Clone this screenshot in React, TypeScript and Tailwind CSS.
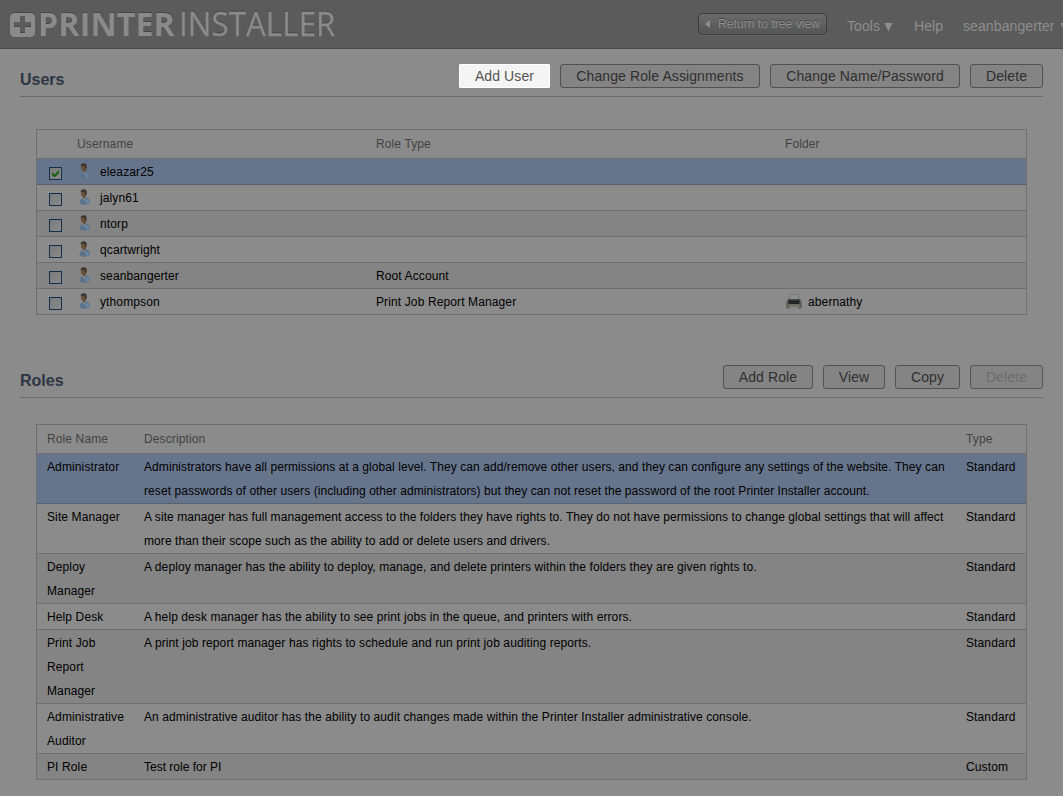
import React from 'react';

const users = [
  { name: 'eleazar25', role: '', folder: '', checked: true },
  { name: 'jalyn61', role: '', folder: '' },
  { name: 'ntorp', role: '', folder: '' },
  { name: 'qcartwright', role: '', folder: '' },
  { name: 'seanbangerter', role: 'Root Account', folder: '' },
  { name: 'ythompson', role: 'Print Job Report Manager', folder: 'abernathy' },
];

const roles = [
  {
    name: ['Administrator'],
    text: [
      'Administrators have all permissions at a global level. They can add/remove other users, and they can configure any settings of the website. They can',
      'reset passwords of other users (including other administrators) but they can not reset the password of the root Printer Installer account.',
    ],
    type: 'Standard',
    tracking: 'tracking-[0.072px]',
  },
  {
    name: ['Site Manager'],
    text: [
      'A site manager has full management access to the folders they have rights to. They do not have permissions to change global settings that will affect',
      'more than their scope such as the ability to add or delete users and drivers.',
    ],
    type: 'Standard',
    tracking: 'tracking-[0.076px]',
  },
  {
    name: ['Deploy', 'Manager'],
    text: ['A deploy manager has the ability to deploy, manage, and delete printers within the folders they are given rights to.'],
    type: 'Standard',
    tracking: 'tracking-[0.09px]',
  },
  {
    name: ['Help Desk'],
    text: ['A help desk manager has the ability to see print jobs in the queue, and printers with errors.'],
    type: 'Standard',
    tracking: 'tracking-[0.09px]',
  },
  {
    name: ['Print Job', 'Report', 'Manager'],
    text: ['A print job report manager has rights to schedule and run print job auditing reports.'],
    type: 'Standard',
    tracking: 'tracking-[0.105px]',
  },
  {
    name: ['Administrative', 'Auditor'],
    text: ['An administrative auditor has the ability to audit changes made within the Printer Installer administrative console.'],
    type: 'Standard',
    tracking: 'tracking-[0.092px]',
  },
  { name: ['PI Role'], text: ['Test role for PI'], type: 'Custom', tracking: 'tracking-normal' },
];

function rowColor(i: number) {
  if (i === 0) return 'bg-[#67758c] border-[#58626f]';
  return i % 2 === 1 ? 'bg-[#8b8b8b] border-[#6f6f6f]' : 'bg-[#848484] border-[#6f6f6f]';
}

function Logo() {
  return (
    <svg width="340" height="48" className="block shrink-0" fontFamily="'Open Sans', sans-serif" fontSize="32.5">
      <g fill="#8a8a8a" className="[filter:drop-shadow(0_-1px_0_#484848)]">
        <path
          fillRule="evenodd"
          d="M14.500 13h16a4.500 4.500 0 0 1 4.500 4.500v15a4.500 4.500 0 0 1-4.500 4.500h-16a4.500 4.500 0 0 1-4.500-4.500v-15a4.500 4.500 0 0 1 4.500-4.500zM20 16v6h-6v5h6v6h5v-6h6v-5h-6v-6z"
        />
        <text x="38" y="36.200" fontWeight="700" textLength="137" lengthAdjust="spacingAndGlyphs">PRINTER</text>
        <text x="179" y="36.200" fontWeight="400" stroke="#8a8a8a" strokeWidth=".3" textLength="156.500" lengthAdjust="spacingAndGlyphs">INSTALLER</text>
      </g>
    </svg>
  );
}

function Person() {
  return (
    <svg width="16" height="16" viewBox="0 0 16 16" className="shrink-0">
      <path d="M2.800 14.500C2.500 11.500 4 9.500 6 8.700l3-.4c2.600.8 4.200 2.500 4.200 5C12.500 15 9.500 15.800 7 15.700c-1.800 0-3.400-.4-4.200-1.200z" fill="#5b7289" />
      <path d="M9.500 10c1.800.3 2.900 1.600 3 3.300-1 1-2 1.300-3.200 1.400-1.200-1.600-1-3.500.2-4.700z" fill="#6785a2" />
      <path d="M5.300 8.500l3-.8.7 1.300-1.400 3z" fill="#83878c" />
      <path d="M4.700 6.500l3.600-.5.200 2.500-1.200 1z" fill="#5f4734" />
      <ellipse cx="6.700" cy="4.300" rx="2.800" ry="3.500" fill="#6a513b" />
      <path d="M3.500 3C3.700 1.200 5 .3 6.700.3c2.200 0 3.100 1.500 2.900 3.400-.1 1.400-.6 2.700-1.400 3.500C8.400 5 8 3.500 6.800 2.900 5.700 2.500 4.500 2.600 3.500 3z" fill="#3a342e" />
    </svg>
  );
}

function Printer() {
  return (
    <svg width="18" height="17" viewBox="0 0 18 17" className="shrink-0">
      <path d="M4.500 1.500h9v5h-9z" fill="#8c8e91" stroke="#75787c" strokeWidth="1" />
      <path d="M3 6h12l1.800 3v5.500c0 .6-.4 1-1 1H2.200c-.6 0-1-.4-1-1V9z" fill="#5f6054" />
      <path d="M3.500 6h11v5h-11z" fill="#222323" />
      <path d="M4 6h10v1.500H4z" fill="#494c4f" />
      <path d="M3.500 11.500h11v3h-11z" fill="#74756d" />
      <path d="M5 14h8v1.500H5z" fill="#8b8b88" />
    </svg>
  );
}

function Checkbox({ checked }: { checked?: boolean }) {
  return (
    <svg width="13" height="13" className="block shrink-0">
      <defs>
        <linearGradient id="box" x1="0" y1="0" x2="1" y2="1">
          <stop offset="0" stopColor="#797979" />
          <stop offset="1" stopColor="#8b8b8b" />
        </linearGradient>
      </defs>
      <rect x=".5" y=".5" width="12" height="12" fill="url(#box)" stroke="#10304d" />
      {checked && <path d="M3 5v3l2 2h1l4-4V3L5.500 7.500z" fill="#125d12" />}
    </svg>
  );
}

function Button({ label, size, variant }: { label: string; size: string; variant?: string }) {
  const look =
    variant === 'active'
      ? 'bg-[#f4f4f4] border-white text-[#555] rounded-[1px]'
      : variant === 'disabled'
        ? 'bg-[#848484] border-[#555] text-[#6c6c6c] rounded-[3px]'
        : 'bg-[#848484] border-[#515151] text-[#2f2f2f] rounded-[3px]';
  return (
    <button className={`flex h-6 items-center justify-center border text-sm leading-none tracking-[0.1px] whitespace-nowrap ${size} ${look}`}>
      {label}
    </button>
  );
}

function Heading({ title, children }: { title: string; children: React.ReactNode }) {
  return (
    <div className="mx-5 flex h-[33px] items-start justify-between border-b border-[#6c6c6c]">
      <h2 className="pt-1 text-base leading-6 font-bold text-[#2c3544]">{title}</h2>
      <div className="flex gap-2.5">{children}</div>
    </div>
  );
}

export default function App() {
  return (
    <div className="h-[796px] w-[1063px] overflow-hidden bg-[#8b8b8b] font-['Liberation_Sans',sans-serif] text-xs text-black">
      <header className="flex h-[49px] items-start overflow-hidden border-b border-[#4b4b4b] bg-[#5b5b5b] text-sm text-[#8e8e8e]">
        <Logo />
        <button className="mt-[13px] ml-[358px] flex h-[22px] w-[129px] shrink-0 items-center rounded-[4px] border border-[#3c3c3c] bg-linear-to-b from-[#6b6b6b] to-[#555] pl-1.5 text-xs tracking-[0.07px] whitespace-nowrap shadow-[0_1px_0_#666]">
          <svg width="5" height="8" className="mr-2 shrink-0"><path d="M5 0v8L0 4z" fill="#8e8e8e" /></svg>
          <span className="[text-shadow:0_-1px_0_#444]">Return to tree view</span>
        </button>
        <nav className="flex shrink-0 pt-4 pl-5 leading-5 tracking-[0.1px] whitespace-nowrap">
          <span className="flex w-[67px]">
            Tools
            <svg width="9" height="9" className="mt-[7px] ml-1"><path d="M.5 0h8l-4 8.500z" fill="#8e8e8e" /></svg>
          </span>
          <span className="w-[49px]">Help</span>
          <span className="flex">
            seanbangerter
            <svg width="9" height="9" className="mt-[7px] ml-[5px]"><path d="M.5 0h8l-4 8.500z" fill="#8e8e8e" /></svg>
          </span>
        </nav>
      </header>

      <section className="pt-[15px]">
        <Heading title="Users">
          <Button label="Add User" size="w-[91px]" variant="active" />
          <Button label="Change Role Assignments" size="w-[200px]" />
          <Button label="Change Name/Password" size="w-[190px]" />
          <Button label="Delete" size="w-[73px]" />
        </Heading>
        <div className="mt-8 ml-9 w-[991px] border border-b-0 border-[#6f6f6f] tracking-[0.12px]">
          <div className="grid h-[29px] grid-cols-[40px_299px_409px_1fr] border-b border-[#6f6f6f] leading-7 text-[#424242]">
            <span />
            <span>Username</span>
            <span>Role Type</span>
            <span>Folder</span>
          </div>
          {users.map((u, i) => (
            <div key={u.name} className={`grid h-[26px] grid-cols-[40px_299px_409px_1fr] border-b leading-[26px] ${rowColor(i)}`}>
              <span className="pt-2 pl-3"><Checkbox checked={u.checked} /></span>
              <span className="flex items-start"><span className="pt-1"><Person /></span><span className="pl-[7px]">{u.name}</span></span>
              <span>{u.role}</span>
              <span className="flex items-start">
                {u.folder && <><span className="pt-1"><Printer /></span><span className="pl-[5px]">{u.folder}</span></>}
              </span>
            </div>
          ))}
        </div>
      </section>

      <section className="pt-[50px]">
        <Heading title="Roles">
          <Button label="Add Role" size="w-[90px]" />
          <Button label="View" size="w-[62px]" />
          <Button label="Copy" size="w-[65px]" />
          <Button label="Delete" size="w-[73px]" variant="disabled" />
        </Heading>
        <div className="mt-[26px] ml-9 w-[991px] border border-b-0 border-[#6f6f6f] tracking-[0.12px]">
          <div className="grid h-[29px] grid-cols-[97px_822px_1fr] border-b border-[#6f6f6f] pl-2.5 leading-7 text-[#424242]">
            <span>Role Name</span>
            <span>Description</span>
            <span>Type</span>
          </div>
          {roles.map((r, i) => (
            <div key={r.type + i} className={`grid grid-cols-[97px_822px_1fr] border-b pt-px pl-2.5 leading-6 whitespace-nowrap ${rowColor(i)}`}>
              <div>{r.name.map((l) => <div key={l}>{l}</div>)}</div>
              <div className={r.tracking}>{r.text.map((l) => <div key={l}>{l}</div>)}</div>
              <div>{r.type}</div>
            </div>
          ))}
        </div>
      </section>
    </div>
  );
}
